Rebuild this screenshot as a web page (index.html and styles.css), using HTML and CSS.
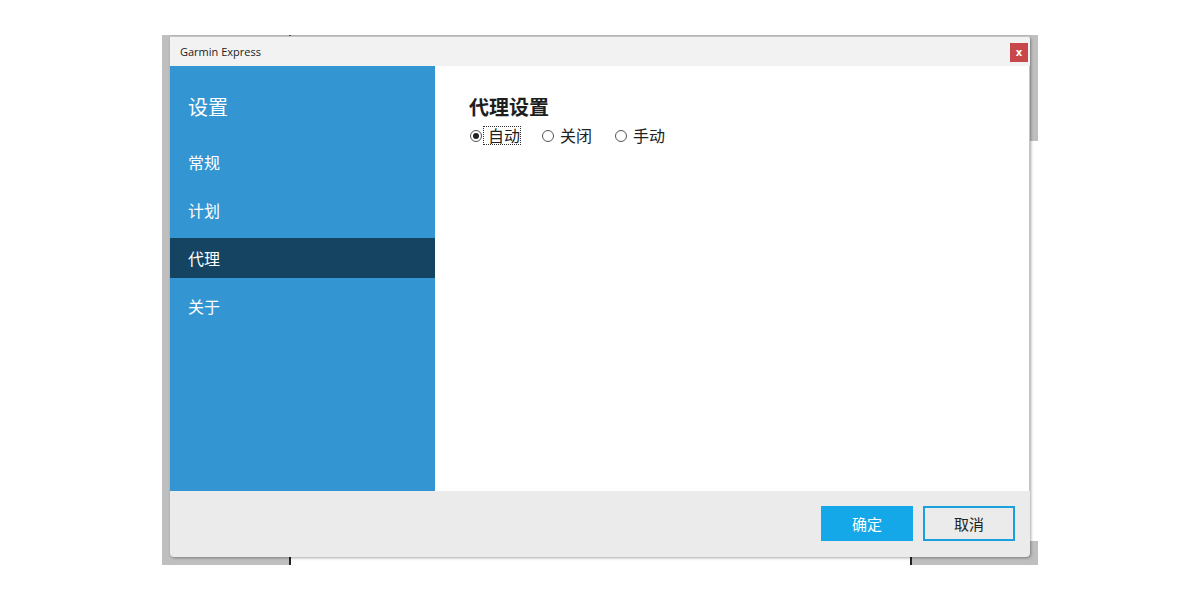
FILE: index.html
```html
<!DOCTYPE html>
<html lang="zh-CN">
<head>
    <meta charset="UTF-8">
    <title>Garmin Express - 设置</title>
    <link rel="stylesheet" href="styles.css">
</head>
<body>
    <div class="backdrop">
        <div class="patch patch-right"></div>
        <div class="patch patch-bottom"></div>
        <div class="dialog">
            <div class="titlebar">
                <span class="title">Garmin Express</span>
                <span class="close-btn">x</span>
            </div>
            <div class="dialog-body">
                <div class="sidebar">
                    <div class="sidebar-title">设置</div>
                    <div class="menu-item">常规</div>
                    <div class="menu-item">计划</div>
                    <div class="menu-item active">代理</div>
                    <div class="menu-item">关于</div>
                </div>
                <div class="content">
                    <h2>代理设置</h2>
                    <div class="radio-row">
                        <label class="radio"><span class="dot checked"></span><span class="radio-label focused">自动</span></label>
                        <label class="radio"><span class="dot"></span><span class="radio-label">关闭</span></label>
                        <label class="radio"><span class="dot"></span><span class="radio-label">手动</span></label>
                    </div>
                </div>
            </div>
            <div class="footer">
                <span class="btn btn-primary">确定</span>
                <span class="btn btn-outline">取消</span>
            </div>
        </div>
    </div>
</body>
</html>
```

FILE: styles.css
```css
body {
    margin: 0;
    background-color: #ffffff;
    font-family: "Noto Sans CJK SC", "Noto Sans", sans-serif;
    color: #222;
}
.backdrop {
    position: relative;
    width: 876px;
    height: 530px;
    box-sizing: border-box;
    margin: 35px 0 0 162px;
    padding: 1px 8px 8px 8px;
    background-color: #bfbfbf;
}
.backdrop::before {
    content: "";
    position: absolute;
    left: 127px;
    top: 0;
    width: 2px;
    height: 1px;
    background-color: #555;
}
.patch {
    position: absolute;
    background-color: #ffffff;
}
.patch-right {
    left: 868px;
    top: 106px;
    width: 8px;
    height: 400px;
}
.patch-bottom {
    left: 127px;
    top: 522px;
    width: 623px;
    height: 8px;
    border-left: 2px solid #222;
    border-right: 2px solid #222;
    box-sizing: border-box;
}
.dialog {
    position: relative;
    width: 860px;
    height: 521px;
    display: flex;
    flex-direction: column;
    background-color: #ebebeb;
    border-radius: 0 4px 4px 4px;
    box-shadow: 1px 1px 3px rgba(0, 0, 0, 0.35);
    overflow: hidden;
}
.titlebar {
    height: 30px;
    flex: none;
    display: flex;
    align-items: center;
    justify-content: space-between;
    padding: 0 2px 0 10px;
    background-color: #f2f2f2;
    border-top: 1px solid #c4c4c4;
    box-sizing: border-box;
}
.title {
    font-family: "Open Sans", "Noto Sans", sans-serif;
    font-size: 11px;
    color: #222;
}
.close-btn {
    width: 18px;
    height: 19px;
    margin-top: 2px;
    display: flex;
    align-items: center;
    justify-content: center;
    background-color: #c8474a;
    color: #fff;
    font-family: "DejaVu Sans", sans-serif;
    font-size: 10px;
    font-weight: bold;
    line-height: 1;
}
.dialog-body {
    flex: 1;
    display: flex;
}
.sidebar {
    width: 265px;
    background-color: #3396d3;
    color: #fff;
    padding-top: 28px;
    box-sizing: border-box;
}
.sidebar-title {
    font-size: 20px;
    padding-left: 18px;
    height: 26px;
    line-height: 26px;
    margin-bottom: 22px;
}
.menu-item {
    height: 40px;
    line-height: 40px;
    margin-top: 8px;
    padding-left: 18px;
    font-size: 16px;
}
.menu-item:first-of-type {
    margin-top: 0;
}
.menu-item.active {
    background-color: #144462;
}
.content {
    flex: 1;
    background-color: #fff;
    border-right: 1px solid #c4c4c4;
    padding: 28px 0 0 34px;
}
.content h2 {
    margin: 0;
    font-size: 20px;
    font-weight: bold;
    line-height: 26px;
    color: #1e1e1e;
}
.radio-row {
    display: flex;
    align-items: center;
    gap: 20px;
    margin-top: 6px;
    font-size: 16px;
}
.radio {
    display: flex;
    align-items: center;
}
.dot {
    width: 12px;
    height: 12px;
    border: 1px solid #555;
    border-radius: 50%;
    box-sizing: border-box;
    margin: 0 4px 0 1px;
    background-color: #fff;
    display: flex;
    align-items: center;
    justify-content: center;
}
.dot.checked::after {
    content: "";
    width: 6px;
    height: 6px;
    border-radius: 50%;
    background-color: #222;
}
.radio-label {
    line-height: 17px;
    padding: 0 1px;
    border: 1px solid transparent;
}
.radio-label.focused {
    border: 1px dotted #333;
    margin-left: -3px;
    padding-left: 4px;
    padding-right: 0;
}
.footer {
    height: 66px;
    flex: none;
    display: flex;
    justify-content: flex-end;
    align-items: center;
    gap: 10px;
    padding: 0 15px 1px 0;
    box-sizing: border-box;
}
.btn {
    width: 92px;
    height: 35px;
    box-sizing: border-box;
    display: flex;
    align-items: center;
    justify-content: center;
    font-size: 15px;
}
.btn-primary {
    background-color: #15a8e8;
    color: #fff;
}
.btn-outline {
    border: 2px solid #1ba0de;
    color: #222;
}
```
